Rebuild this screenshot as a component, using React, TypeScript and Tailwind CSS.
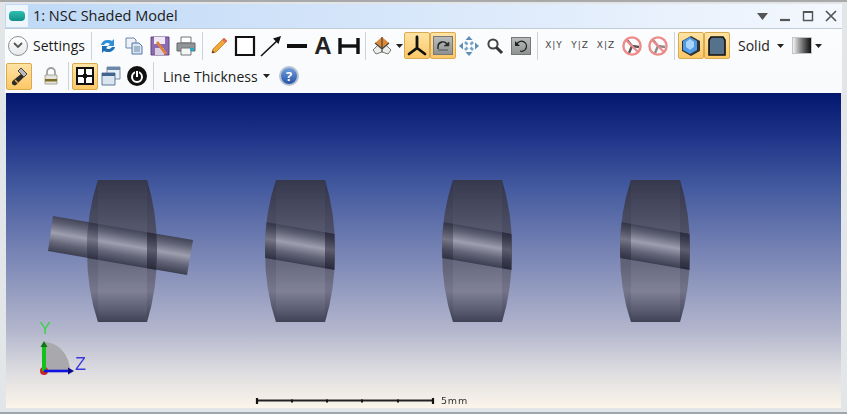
import type { ReactNode } from "react";

const font = { fontFamily: '"Open Sans", "Noto Sans", sans-serif' };

function Btn({ active, children, w = "w-[26px]" }: { active?: boolean; children: ReactNode; w?: string }) {
  return (
    <div
      className={`${w} h-[27px] shrink-0 flex items-center justify-center rounded-[2px] border ${
        active ? "border-[#d9aa4e] bg-gradient-to-b from-[#fde3a4] to-[#fcc765]" : "border-transparent"
      }`}
    >
      {children}
    </div>
  );
}

function Sep() {
  return <div className="w-px h-[28px] bg-[#ccd2d8] shrink-0 mx-[3px]" />;
}

function Caret() {
  return (
    <svg width="7" height="4" viewBox="0 0 7 4" className="shrink-0">
      <path d="M0 0h7L3.5 4z" fill="#222" />
    </svg>
  );
}

function Ico({ children }: { children: ReactNode }) {
  return (
    <svg width="22" height="22" viewBox="0 0 22 22" className="shrink-0">
      {children}
    </svg>
  );
}

function AxisPair({ label }: { label: string }) {
  return (
    <span className="text-[9px] leading-none tracking-[1px] text-[#444] whitespace-nowrap" style={{ fontFamily: '"DejaVu Sans", sans-serif' }}>
      {label}
    </span>
  );
}

function NoSign({ gray }: { gray?: boolean }) {
  return (
    <Ico>
      <path d="M11 11 6 5M11 11l7 1M11 11l-3 7" stroke={gray ? "#8b8b8b" : "#555"} strokeWidth="2.4" fill="none" />
      <circle cx="11" cy="11" r="8.6" fill="none" stroke="#ee8a8a" strokeWidth="2.4" />
      <path d="M5 5l12 12" stroke="#ee8a8a" strokeWidth="2.2" />
    </Ico>
  );
}

function Toolbar1() {
  return (
    <div className="flex items-center h-[33px] pl-[2px]">
      <div className="w-[20px] h-[20px] ml-[1px] rounded-full border border-[#8c8f94] bg-gradient-to-b from-white to-[#e6e8ea] flex items-center justify-center shrink-0">
        <svg width="10" height="7" viewBox="0 0 10 7">
          <path d="M1 1l4 4 4-4" fill="none" stroke="#555" strokeWidth="1.8" />
        </svg>
      </div>
      <span className="ml-[5px] text-[14px] text-[#1b1b1b] w-[55px] shrink-0 whitespace-nowrap">Settings</span>
      <Sep />
      <Btn>
        <Ico>
          <path d="M4 10a7 6 0 0 1 11-4l2-2v7h-6l2-2a4 4 0 0 0-6 1z" fill="#2f8fd8" />
          <path d="M18 12a7 6 0 0 1-11 4l-2 2v-7h6l-2 2a4 4 0 0 0 6-1z" fill="#1f6fb8" />
        </Ico>
      </Btn>
      <Btn>
        <Ico>
          <path d="M3 3h8l2 2v8H3z" fill="#eef2f8" stroke="#6d88a8" />
          <path d="M9 8h7l3 3v8H9z" fill="#dbe6f3" stroke="#4f77a8" />
          <path d="M11 12h6M11 14h6M11 16h6" stroke="#6d88a8" />
        </Ico>
      </Btn>
      <Btn>
        <Ico>
          <path d="M2 2h18v18H2z" fill="#8d6bb0" stroke="#5e4582" />
          <path d="M5 2h11v7H5z" fill="#efe9f5" />
          <path d="M6 13h9v7H6z" fill="#d9cfe4" />
          <path d="M9 6l9 12-2 2L7 8z" fill="#e0823a" />
        </Ico>
      </Btn>
      <Btn>
        <Ico>
          <path d="M6 2h10v6H6z" fill="#fff" stroke="#777" />
          <path d="M2 8h18v8H2z" fill="#8f959b" stroke="#666" />
          <path d="M6 13h10v7H6z" fill="#f4f6f8" stroke="#777" />
          <path d="M15 13h4v3h-4z" fill="#2aa7c4" />
        </Ico>
      </Btn>
      <Sep />
      <Btn>
        <Ico>
          <path d="M16 3l3 3L8 17l-4 1 1-4z" fill="#f0a83a" stroke="#c87a1c" strokeWidth="0.8" />
          <path d="M16 3l3 3-2 2-3-3z" fill="#e26d5a" />
          <path d="M4 18l.6-2.6 2 2z" fill="#333" />
        </Ico>
      </Btn>
      <Btn>
        <Ico>
          <path d="M2 2h18v18H2z" fill="#fff" stroke="#111" strokeWidth="2.2" />
        </Ico>
      </Btn>
      <Btn>
        <Ico>
          <path d="M1 21 19 4" stroke="#111" strokeWidth="1.6" />
          <path d="M21 1l-8 2.5 5.500 5.500z" fill="#111" />
        </Ico>
      </Btn>
      <Btn>
        <Ico>
          <path d="M1 11h20" stroke="#111" strokeWidth="4" />
        </Ico>
      </Btn>
      <Btn>
        <span className="text-[24px] leading-none font-bold text-[#222]" style={{ fontFamily: '"Liberation Sans", sans-serif' }}>
          A
        </span>
      </Btn>
      <Btn>
        <Ico>
          <path d="M2 3v16M20 3v16" stroke="#111" strokeWidth="3.4" />
          <path d="M2 11h18" stroke="#111" strokeWidth="3.4" />
        </Ico>
      </Btn>
      <Sep />
      <Btn>
        <Ico>
          <path d="M11 6 20 15l-3 4-6-2-6 2-3-4z" fill="#ecece8" stroke="#777" />
          <path d="M11 2l7 6-7 6-7-6z" fill="#dd8a35" />
          <path d="M11 2v12M4 8l7 6 7-6M11 14v3" stroke="#444" strokeWidth="1.2" fill="none" />
        </Ico>
      </Btn>
      <div className="w-[10px] flex justify-center shrink-0 -ml-[1px]">
        <Caret />
      </div>
      <Btn active>
        <Ico>
          <path d="M11 2v11L3 19M11 13l8 6" fill="none" stroke="#111" strokeWidth="2.8" strokeLinecap="round" />
        </Ico>
      </Btn>
      <Btn active>
        <div className="w-[20px] h-[19px] bg-gradient-to-b from-[#b9bcba] to-[#8e9391] border border-[#777] flex items-center justify-center">
          <svg width="16" height="14" viewBox="0 0 16 14">
            <path d="M3 10V7a5 5 0 0 1 9-2" fill="none" stroke="#222" strokeWidth="1.4" />
            <path d="M9 7h5V3zM3 11h10" fill="#222" stroke="#444" strokeWidth="0.8" />
          </svg>
        </div>
      </Btn>
      <Btn>
        <Ico>
          <path d="M11 1l3.500 4h-7zM11 21l-3.500-4h7zM1 11l4-3.500v7zM21 11l-4 3.500v-7z" fill="#5f8fb8" />
          <path d="M7 7l2.500 2.500M15 7l-2.500 2.500M7 15l2.500-2.500M15 15l-2.500-2.500" stroke="#7ba3c6" strokeWidth="2.6" />
        </Ico>
      </Btn>
      <Btn>
        <Ico>
          <circle cx="9" cy="9" r="4.6" fill="#fff" stroke="#444" strokeWidth="2" />
          <path d="M12.5 12.5 18 18" stroke="#333" strokeWidth="3" />
        </Ico>
      </Btn>
      <Btn>
        <div className="w-[20px] h-[18px] bg-gradient-to-b from-[#b9bcba] to-[#8e9391] border border-[#777] flex items-center justify-center">
          <svg width="14" height="14" viewBox="0 0 14 14">
            <path d="M3 5a5 5 0 1 1 3 7" fill="none" stroke="#222" strokeWidth="1.3" />
            <path d="M1 2v5h5z" fill="#222" />
          </svg>
        </div>
      </Btn>
      <Sep />
      <Btn>
        <AxisPair label="X|Y" />
      </Btn>
      <Btn>
        <AxisPair label="Y|Z" />
      </Btn>
      <Btn>
        <AxisPair label="X|Z" />
      </Btn>
      <Btn>
        <NoSign />
      </Btn>
      <Btn>
        <NoSign gray />
      </Btn>
      <Sep />
      <Btn active>
        <Ico>
          <path d="M11 1 20 6v10l-9 5-9-5V6z" fill="#333" />
          <path d="M10 2 17 6v9l-7 4-7-4V6z" fill="#4f9be8" />
          <path d="M10 4 14 7v5l-4 3-4-3V7z" fill="#a8d4fb" />
        </Ico>
      </Btn>
      <Btn active>
        <Ico>
          <path d="M5 2h12l2 3v15H3V5z" fill="#56718c" stroke="#111" strokeWidth="1.6" />
        </Ico>
      </Btn>
      <span className="ml-[8px] text-[14px] text-[#1b1b1b] w-[34px] shrink-0">Solid</span>
      <div className="ml-[5px] mr-[8px]">
        <Caret />
      </div>
      <div className="w-[20px] h-[17px] shrink-0 border border-[#c4c4c4] bg-gradient-to-r from-[#f4f4f4] to-[#111]" />
      <div className="ml-[3px]">
        <Caret />
      </div>
    </div>
  );
}

function Toolbar2() {
  return (
    <div className="flex items-center h-[31px] pb-[3px] pl-[1px]">
      <Btn active>
        <Ico>
          <path d="M13 9 16 12 8 20c-1 1-3 0-3.500-.5S3.500 17 4.500 16z" fill="#2c2c2c" />
          <path d="M13 3l6 6-3 3-6-6z" fill="#b9b9b9" stroke="#444" />
          <path d="M7 15l3 3" stroke="#e8a33a" strokeWidth="1.5" />
        </Ico>
      </Btn>
      <div className="w-[6px] shrink-0" />
      <Btn>
        <Ico>
          <path d="M7 10V7a4 4 0 0 1 8 0v3" fill="none" stroke="#a0a0a0" strokeWidth="1.8" />
          <path d="M5 10h12v9H5z" fill="#e4e4dc" stroke="#a8a89a" />
          <path d="M5 14h12v2.500H5z" fill="#7d6e26" />
        </Ico>
      </Btn>
      <div className="w-[1px] shrink-0" />
      <Sep />
      <Btn active>
        <Ico>
          <path d="M2 2h18v18H2z" fill="#111" />
          <path d="M4 4h6v6H4zM12 4h6v6h-6zM4 12h6v6H4zM12 12h6v6h-6z" fill="#fff" />
          <path d="M9 9h4v4H9z" fill="#111" />
        </Ico>
      </Btn>
      <Btn>
        <Ico>
          <path d="M7 2h13v12H7z" fill="#e8eef5" stroke="#7a8fa8" />
          <path d="M7 2h13v3H7z" fill="#6b87ab" />
          <path d="M2 8h13v12H2z" fill="#dbe5f0" stroke="#5f7a9c" />
          <path d="M2 8h13v3H2z" fill="#40648f" />
        </Ico>
      </Btn>
      <Btn>
        <Ico>
          <circle cx="11" cy="11" r="10" fill="#111" />
          <circle cx="11" cy="12" r="5" fill="none" stroke="#fff" strokeWidth="2" />
          <path d="M11 5v7" stroke="#111" strokeWidth="4" />
          <path d="M11 6v6" stroke="#fff" strokeWidth="2" />
        </Ico>
      </Btn>
      <Sep />
      <span className="ml-[6px] text-[14px] text-[#1b1b1b] w-[95px] shrink-0 whitespace-nowrap">Line Thickness</span>
      <div className="ml-[5px]">
        <Caret />
      </div>
      <div className="ml-[6px]">
        <Btn>
          <div className="w-[20px] h-[20px] rounded-full bg-gradient-to-b from-[#6f9fdc] to-[#2a53a8] border-2 border-[#b6c3d2] flex items-center justify-center text-white text-[13px] font-bold leading-none">
            ?
          </div>
        </Btn>
      </div>
    </div>
  );
}

const lensPath = "M98 180H147Q157 212 157 250Q157 290 147 322H98Q87 290 87 250Q87 212 98 180Z";
const bandPath = "M20 210.500 210 243 V279 L20 246.500Z";

function Lens({ dx, id }: { dx: number; id: string }) {
  return (
    <g transform={`translate(${dx} 0)`}>
      <clipPath id={id}>
        <path d={lensPath} />
      </clipPath>
      <clipPath id={`${id}l`} clipPath={`url(#${id})`}>
        <rect x="84" y="178" width="14" height="146" />
      </clipPath>
      <clipPath id={`${id}r`} clipPath={`url(#${id})`}>
        <rect x="147" y="178" width="13" height="146" />
      </clipPath>
      <path d={lensPath} fill="url(#lensBody)" />
      <path d={bandPath} fill="url(#shaft)" clipPath={`url(#${id})`} />
      <rect x="84" y="178" width="14" height="146" fill="#1a1b30" opacity="0.1" clipPath={`url(#${id})`} />
      <rect x="147" y="178" width="13" height="146" fill="#1a1b30" opacity="0.12" clipPath={`url(#${id})`} />
      <path d={bandPath} fill="#10111f" opacity="0.22" clipPath={`url(#${id}l)`} />
      <path d={bandPath} fill="#10111f" opacity="0.38" clipPath={`url(#${id}r)`} />
    </g>
  );
}

function Viewport() {
  return (
    <div className="flex-1 min-h-0 mx-[6px] bg-[linear-gradient(180deg,#03176f_0%,#1f3488_14%,#445a9f_30%,#7a86b5_52%,#b2b5cc_75%,#dcdbdf_88%,#fbf5ea_100%)]">
      <svg viewBox="6 93 835 315" className="block w-full h-full">
        <defs>
          <linearGradient id="lensBody" x1="0" y1="180" x2="0" y2="322" gradientUnits="userSpaceOnUse">
            <stop offset="0" stopColor="#36384d" />
            <stop offset="0.3" stopColor="#515369" />
            <stop offset="0.6" stopColor="#6a6b80" />
            <stop offset="0.78" stopColor="#808197" />
            <stop offset="0.92" stopColor="#5a5b70" />
            <stop offset="1" stopColor="#3f4156" />
          </linearGradient>
          <linearGradient id="shaft" x1="126" y1="228" x2="120" y2="263" gradientUnits="userSpaceOnUse">
            <stop offset="0" stopColor="#404155" />
            <stop offset="0.2" stopColor="#606175" />
            <stop offset="0.48" stopColor="#9d9eae" />
            <stop offset="0.75" stopColor="#646578" />
            <stop offset="1" stopColor="#3e4054" />
          </linearGradient>
          <filter id="soft">
            <feGaussianBlur stdDeviation="0.45" />
          </filter>
        </defs>
        <g filter="url(#soft)">
          <path d="M48 251 53 216 193 240 187 275Z" fill="url(#shaft)" />
          <Lens dx={0} id="l1" />
          <Lens dx={178} id="l2" />
          <Lens dx={355} id="l3" />
          <Lens dx={533} id="l4" />
        </g>

        <path d="M45 371V342A26 29 0 0 1 70 371Z" fill="#a9a9ad" />
        <circle cx="44" cy="371" r="4" fill="#c8262a" />
        <path d="M44 371V345" stroke="#12c21a" strokeWidth="4" />
        <path d="M44 341l-3.500 6h7z" fill="#0a7a10" />
        <path d="M44 371H70" stroke="#1111dd" strokeWidth="2.600" />
        <path d="M74 371l-6-3.500v7z" fill="#0a0a80" />
        <text x="39.500" y="334" fontSize="17" fill="#3fd24a" fontFamily="Liberation Sans, sans-serif">Y</text>
        <text x="75" y="370" fontSize="18" fill="#3a3ae0" fontFamily="Liberation Sans, sans-serif">Z</text>

        <path d="M257 400.500H433" stroke="#222" strokeWidth="1.800" />
        <path d="M257 398v6M433 398v6" stroke="#111" strokeWidth="2.200" />
        <path d="M292 399.500v3M327 399.500v3M362 399.500v3M398 399.500v3" stroke="#111" strokeWidth="2" />
        <text x="441" y="404" fontSize="9.500" letterSpacing="0.8" fill="#333" fontFamily="DejaVu Sans, sans-serif">5mm</text>
      </svg>
    </div>
  );
}

export default function App() {
  return (
    <div className="w-[847px] h-[414px] flex flex-col overflow-hidden bg-[#e3e6e9] border-t-2 border-b-2 border-t-[#a9a9a9] border-b-[#9ea6ae]" style={font}>
      <div className="h-[25px] mt-[2px] mx-[5px] shrink-0 flex items-center bg-[linear-gradient(90deg,#bfd9f6_0%,#d6e6fa_45%,#f4f8fe_100%)] border-b border-[#c3cbd3]">
        <div className="w-[22px] h-[22px] ml-[1px] bg-[#eef6fb] flex items-center justify-center shrink-0">
          <div className="w-[16px] h-[10px] rounded-[4px] bg-gradient-to-b from-[#2ec0b0] to-[#0f8f86]" />
        </div>
        <span className="ml-[5px] text-[14.5px] text-[#1a1a1a] whitespace-nowrap">1: NSC Shaded Model</span>
        <div className="ml-auto flex items-center gap-[11px] pr-[5px]">
          <svg width="11" height="7" viewBox="0 0 11 7">
            <path d="M0 0h11L5.500 7z" fill="#555" />
          </svg>
          <svg width="12" height="12" viewBox="0 0 12 12">
            <path d="M1 10h10" stroke="#555" strokeWidth="2.200" />
          </svg>
          <svg width="12" height="12" viewBox="0 0 12 12">
            <path d="M1.500 2h9v8.500h-9z" fill="none" stroke="#555" strokeWidth="1.400" />
            <path d="M1 2h10" stroke="#555" strokeWidth="2" />
          </svg>
          <svg width="12" height="12" viewBox="0 0 12 12">
            <path d="M1 1l10 10M11 1 1 11" stroke="#555" strokeWidth="1.700" />
          </svg>
        </div>
      </div>
      <div className="mx-[5px] shrink-0 bg-gradient-to-b from-[#fbfcfd] to-[#f9fafb]">
        <Toolbar1 />
        <Toolbar2 />
      </div>
      <Viewport />
      <div className="h-[4px] shrink-0" />
    </div>
  );
}
